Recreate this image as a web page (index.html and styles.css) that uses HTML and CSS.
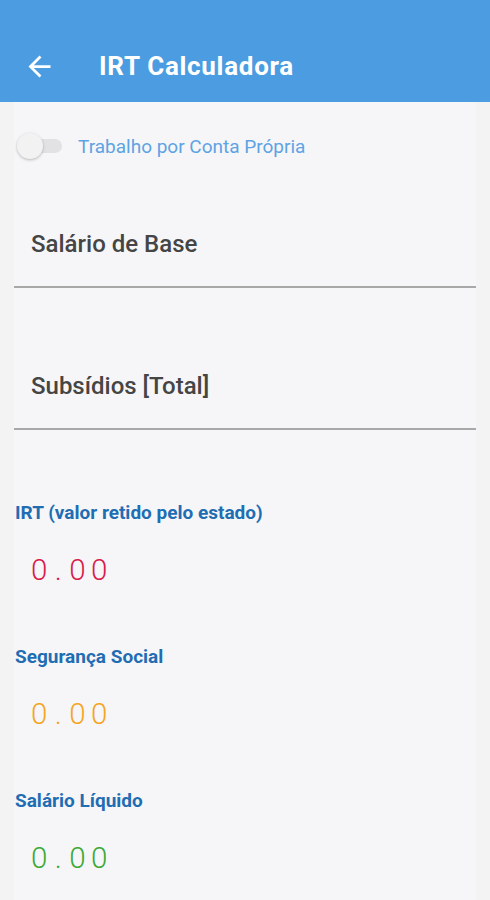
FILE: index.html
```html
<!DOCTYPE html>
<html lang="pt">
<head>
  <meta charset="UTF-8">
  <title>IRT Calculadora</title>
  <meta name="viewport" content="width=device-width, initial-scale=1">
  <link rel="stylesheet" href="styles.css">
</head>
<body>

  <header class="appbar">
    <svg class="back" viewBox="0 0 24 24" width="33" height="33" aria-hidden="true">
      <path d="M20 11H7.83l5.59-5.59L12 4l-8 8 8 8 1.41-1.41L7.83 13H20v-2z" fill="#fff"/>
    </svg>
    <h1>IRT Calculadora</h1>
  </header>

  <main class="content">
    <div class="switch-row">
      <span class="switch"><span class="thumb"></span></span>
      <span class="switch-label">Trabalho por Conta Própria</span>
    </div>

    <div class="fields">
      <div class="field"><span class="field-label">Salário de Base</span></div>
      <div class="field"><span class="field-label">Subsídios [Total]</span></div>
    </div>

    <section class="result">
      <h2>IRT (valor retido pelo estado)</h2>
      <div class="value red">0<span class="dot">.</span>00</div>
    </section>

    <section class="result">
      <h2>Segurança Social</h2>
      <div class="value orange">0<span class="dot">.</span>00</div>
    </section>

    <section class="result">
      <h2>Salário Líquido</h2>
      <div class="value green">0<span class="dot">.</span>00</div>
    </section>
  </main>

</body>
</html>
```

FILE: styles.css
```css
body {
  margin: 0;
  background: #f3f3f4;
  font-family: Roboto, "Noto Sans", Arial, sans-serif;
  color: #444;
}
.appbar {
  height: 102px;
  background: #4b9ce0;
  display: flex;
  align-items: center;
  padding: 30px 0 0 23px;
  box-sizing: border-box;
}
.back {
  display: block;
}
.appbar h1 {
  margin: 0 0 0 43px;
  font-size: 26px;
  font-weight: 700;
  letter-spacing: 0.7px;
  color: #fff;
}
.content {
  margin: 0 14px;
  min-height: 798px;
  background: #f6f6f8;
  overflow: hidden;
}
.switch-row {
  margin-top: 22px;
  height: 44px;
  display: flex;
  align-items: center;
}
.switch {
  position: relative;
  width: 42px;
  height: 14px;
  margin-left: 6px;
  border-radius: 7px;
  background: #e2e2e4;
}
.thumb {
  position: absolute;
  left: -3px;
  top: -6px;
  width: 26px;
  height: 26px;
  border-radius: 50%;
  background: #f2f2f2;
  box-shadow: 0 1px 3px rgba(0, 0, 0, 0.25);
}
.switch-label {
  margin-left: 16px;
  font-size: 19px;
  color: #5ea3e3;
}
.fields {
  display: flex;
  flex-direction: column;
  gap: 22px;
}
.field {
  padding: 62px 17px 28px;
  border-bottom: 2px solid #a8a8a8;
}
.field-label {
  display: block;
  line-height: 28px;
  font-size: 24px;
  font-weight: 500;
  color: #454545;
}
.result {
  margin-top: 73px;
}
.result + .result {
  margin-top: 59px;
}
.result h2 {
  margin: 0 0 29px 1px;
  line-height: 20px;
  font-size: 19px;
  font-weight: 700;
  color: #1f6db3;
}
.value {
  padding-left: 17px;
  line-height: 36px;
  font-size: 29.5px;
  font-weight: 300;
  letter-spacing: 5.4px;
}
.dot {
  padding: 0 2px;
}
.red {
  color: #d81b4a;
}
.orange {
  color: #f5a524;
}
.green {
  color: #3ba935;
}
```
